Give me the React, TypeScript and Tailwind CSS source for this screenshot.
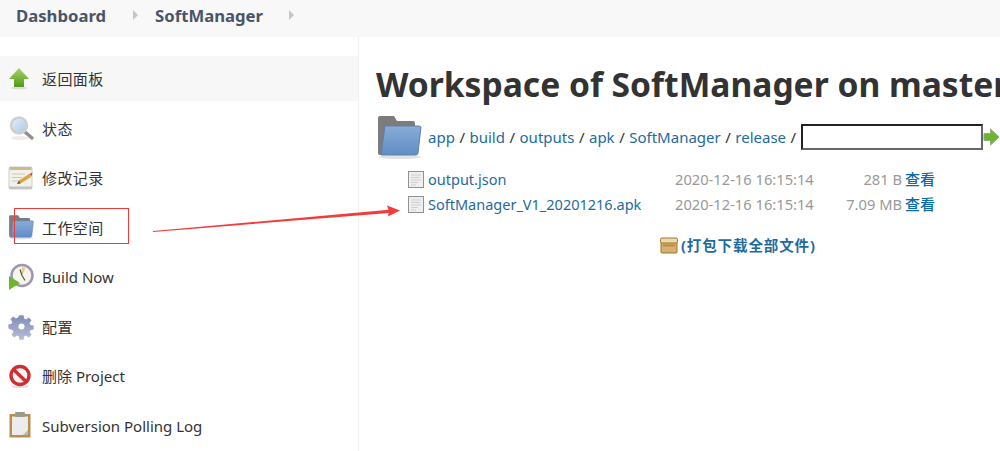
const FONT = { fontFamily: '"Noto Sans", "Noto Sans CJK SC", sans-serif' };

function Sep() {
  return <span className="block w-0 h-0 -mt-[3px] border-y-[5px] border-y-transparent border-l-[5px] border-l-[#c4c6c8]" />;
}

function UpIcon() {
  return (
    <svg width="22" height="24" viewBox="0 0 22 24">
      <defs>
        <linearGradient id="up" x1="0" y1="0" x2="0" y2="1">
          <stop offset="0" stopColor="#a8d468" />
          <stop offset="1" stopColor="#4f9a16" />
        </linearGradient>
      </defs>
      <ellipse cx="11" cy="21" rx="8" ry="1.500" fill="#ddd" />
      <path d="M11 1 21 12h-5v8H6v-8H1z" fill="url(#up)" />
    </svg>
  );
}

function SearchIcon() {
  return (
    <svg width="26" height="26" viewBox="0 0 26 26">
      <defs>
        <linearGradient id="lens" x1="0" y1="0" x2="1" y2="1">
          <stop offset="0" stopColor="#e6f0f8" />
          <stop offset="1" stopColor="#a9c8e6" />
        </linearGradient>
      </defs>
      <ellipse cx="12" cy="23" rx="9" ry="2" fill="#ececec" />
      <path d="M17 17l7 6" stroke="#8f8f8f" strokeWidth="3.400" strokeLinecap="round" />
      <circle cx="11" cy="10.500" r="8" fill="url(#lens)" stroke="#cfcfcf" strokeWidth="2.400" />
    </svg>
  );
}

function NotepadIcon() {
  return (
    <svg width="26" height="26" viewBox="0 0 26 26">
      <rect x="1" y="2" width="23" height="22" rx="1.500" fill="#f3f2ea" stroke="#cfcfc8" />
      <rect x="1.500" y="2" width="22" height="3" fill="#c9bd86" />
      <rect x="1" y="21.500" width="23" height="2.500" fill="#c4c4c4" />
      <path d="M4 9h13M4 12.500h10M4 16h7" stroke="#c9c9c2" />
      <path d="M9 19l2-3.500 10-6.500 2 3-10.500 6.500z" fill="#d9a542" />
      <path d="M21 9l3.500-1.500-1 4z" fill="#c9564a" />
      <path d="M9 19l2-3.500 1.500 3z" fill="#6a5a3c" />
    </svg>
  );
}

function FolderIcon({ size, id }: { size: number; id: string }) {
  return (
    <svg width={size} height={size} viewBox="0 0 46 46">
      <defs>
        <linearGradient id={id} x1="0" y1="0" x2="0" y2="1">
          <stop offset="0" stopColor="#89acd8" />
          <stop offset="1" stopColor="#5f8ec6" />
        </linearGradient>
      </defs>
      <ellipse cx="24" cy="43" rx="21" ry="2" fill="#e2e2e2" />
      <path d="M2 4a2 2 0 0 1 2-2h14l3 5h16a2 2 0 0 1 2 2v5H11L8 41H4a2 2 0 0 1-2-2z" fill="#7c7c7c" />
      <path d="M9 12h34l2 1-3 26a2 2 0 0 1-2 2H5z" fill={`url(#${id})`} stroke="#5f7fa8" />
    </svg>
  );
}

function ClockIcon() {
  return (
    <svg width="26" height="28" viewBox="0 0 26 28">
      <circle cx="14" cy="12.500" r="10.500" fill="#f6f4ec" stroke="#9c98b2" strokeWidth="2.500" />
      <path d="M14 4l3.500 1-2.500 6-2 1z" fill="#e8cf7a" />
      <path d="M14 12.500l3 5M14 12.500l-2-6" stroke="#555" strokeWidth="1.200" />
      <path d="M1 13l11 7-11 7z" fill="#6cb82a" />
    </svg>
  );
}

function GearIcon() {
  return (
    <svg width="27" height="27" viewBox="0 0 24 24">
      <defs>
        <linearGradient id="gear" x1="0" y1="0" x2="0" y2="1">
          <stop offset="0" stopColor="#7f8db8" />
          <stop offset="1" stopColor="#b8bcd8" />
        </linearGradient>
      </defs>
      <path
        fillRule="evenodd"
        d="M10 1h4l.6 3.200 1.900.8 2.700-1.900 2.700 2.700-1.900 2.700.8 1.900 3.200.6v4l-3.200.6-.8 1.900 1.900 2.700-2.700 2.700-2.700-1.900-1.900.8-.6 3.200h-4l-.6-3.200-1.900-.8-2.700 1.900-2.700-2.700 1.900-2.700-.8-1.900L-1 14v-4l3.200-.6.8-1.900-1.900-2.700 2.700-2.700 2.700 1.900 1.900-.8zM12 9a3 3 0 1 0 0 6 3 3 0 0 0 0-6z"
        transform="translate(1.200 1.200) scale(.9)"
        fill="url(#gear)"
      />
    </svg>
  );
}

function NoIcon() {
  return (
    <svg width="24" height="24" viewBox="0 0 24 24">
      <ellipse cx="12" cy="22.500" rx="9" ry="1.500" fill="#ddd" />
      <circle cx="12" cy="11.500" r="9" fill="#f4f4f4" stroke="#cf2f33" strokeWidth="3.400" />
      <path d="M5.500 5.500l13 12.500" stroke="#cf2f33" strokeWidth="3.400" />
    </svg>
  );
}

function ClipboardIcon() {
  return (
    <svg width="24" height="28" viewBox="0 0 24 28">
      <rect x="1.500" y="3" width="21" height="23.500" fill="#b98f4f" />
      <rect x="4" y="5.500" width="16" height="18.500" fill="#ececec" />
      <path d="M15 24l5-5v5z" fill="#bbb" />
      <rect x="7" y="1" width="10" height="5" rx="1" fill="#9a9a94" />
    </svg>
  );
}

function FileIcon() {
  return (
    <svg width="16" height="17" viewBox="0 0 16 17">
      <rect x=".5" y=".5" width="15" height="16" fill="#efefef" stroke="#929292" />
      <path d="M3 4h10M3 6.500h9M3 9h10M3 11.500h7M3 14h5" stroke="#cfcfcf" />
    </svg>
  );
}

function BoxIcon() {
  return (
    <svg width="18" height="17" viewBox="0 0 18 17">
      <rect x="1" y="5" width="16" height="11" rx="1" fill="#d8b070" stroke="#a07430" />
      <rect x=".5" y="1" width="17" height="5" rx="1.500" fill="#ecd9ac" stroke="#a07430" />
      <rect x="3" y="7.500" width="12" height="2" fill="#b98a44" />
    </svg>
  );
}

function GoIcon() {
  return (
    <svg width="16" height="18" viewBox="0 0 16 18">
      <path d="M1 5.500h6.500V1L16 9l-8.500 8v-4.500H1z" fill="#6db52e" stroke="#8fb074" />
    </svg>
  );
}

const TASKS = [
  { label: "返回面板", icon: <UpIcon />, active: true, cjk: true },
  { label: "状态", icon: <SearchIcon />, cjk: true },
  { label: "修改记录", icon: <NotepadIcon />, cjk: true },
  { label: "工作空间", icon: <FolderIcon size={26} id="side-folder" />, cjk: true },
  { label: "Build Now", icon: <ClockIcon /> },
  { label: "配置", icon: <GearIcon />, cjk: true },
  { label: "删除 Project", icon: <NoIcon /> },
  { label: "Subversion Polling Log", icon: <ClipboardIcon /> },
];

const CRUMBS = ["app", "build", "outputs", "apk", "SoftManager", "release"];

const FILES = [
  { name: "output.json", size: "281 B" },
  { name: "SoftManager_V1_20201216.apk", size: "7.09 MB" },
];

export default function App() {
  return (
    <div className="relative w-[1000px] h-[451px] overflow-hidden bg-white text-[#333]" style={FONT}>
      <header className="h-[37px] bg-[#f8f8f8] flex items-center pl-[16px] pb-[5px] text-[16.700px] font-bold text-[#4a5568]">
        <span>Dashboard</span>
        <span className="ml-[27px] mr-[17px]"><Sep /></span>
        <span>SoftManager</span>
        <span className="ml-[26px]"><Sep /></span>
      </header>

      <div className="flex h-[414px]">
        <aside className="w-[359px] shrink-0 border-r border-[#f0f0f0] pt-[19px]">
          {TASKS.map((t) => (
            <div
              key={t.label}
              className={`flex items-center h-[45px] mb-[4.500px] text-[15px] text-[#333] ${t.active ? "bg-[#f7f7f7]" : ""}`}
            >
              <span className="w-[42px] pl-[8px] flex items-center shrink-0">{t.icon}</span>
              <span className={t.cjk ? "pt-[2px] tracking-[0.4px]" : "pt-[2px]"}>{t.label}</span>
            </div>
          ))}
        </aside>

        <main className="flex-1 min-w-0 pl-[17px] pt-[25px]">
          <h1 className="text-[33.600px] leading-[44px] font-bold text-[#333] whitespace-nowrap">
            Workspace of SoftManager on master
          </h1>
          <div className="flex items-center mt-[9px] h-[44px] whitespace-nowrap text-[15px]">
            <span className="mr-[6px] flex"><FolderIcon size={46} id="main-folder" /></span>
            {CRUMBS.map((c) => (
              <span key={c}>
                <span className="text-[#1f6aa0]">{c}</span>
                <span className="mx-[4.500px]">/</span>
              </span>
            ))}
            <span className="w-[182px] h-[26px] border-2 border-t-[#222] border-l-[#222] border-r-[#666] border-b-[#666] shrink-0" />
            <span className="flex shrink-0"><GoIcon /></span>
          </div>

          <div className="mt-[8px] ml-[32px]">
            {FILES.map((f) => (
              <div key={f.name} className="flex items-center h-[25px]">
                <span className="flex w-[20px]"><FileIcon /></span>
                <span className="w-[247px] text-[14.500px] text-[#1f6aa0] whitespace-nowrap">{f.name}</span>
                <span className="w-[139px] text-[14.700px] text-[#999] whitespace-nowrap">2020-12-16 16:15:14</span>
                <span className="w-[88px] text-right text-[14.700px] text-[#999] whitespace-nowrap">{f.size}</span>
                <span className="ml-[3px] text-[15px] text-[#0b6aa8] font-medium">查看</span>
              </div>
            ))}
          </div>

          <div className="mt-[18px] ml-[284px] flex items-center text-[14.500px] tracking-[0.9px] font-bold text-[#1f6aa0] whitespace-nowrap">
            <span className="flex mr-[3px]"><BoxIcon /></span>
            (打包下载全部文件)
          </div>
        </main>
      </div>

      {/* annotation drawn on top of the screenshot */}
      <div className="absolute left-[14px] top-[208px] w-[115px] h-[36px] border border-[#f03a3a]" />
      <svg className="absolute left-0 top-0 pointer-events-none" width="1000" height="451">
        <path d="M153 231 389 209.800 389 213 153 232z" fill="#f23c3c" />
        <path d="M400 210.500 387 205.500 389 211 388 216.500z" fill="#f23c3c" />
      </svg>
    </div>
  );
}
